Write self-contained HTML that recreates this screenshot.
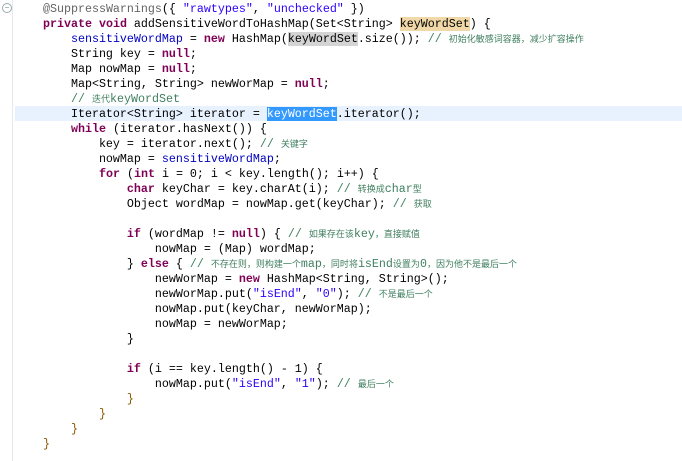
<!DOCTYPE html>
<html><head><meta charset="utf-8"><style>
body{margin:0;background:#fff;width:682px;height:461px;overflow:hidden;position:relative}
.g{position:absolute;left:12px;top:0;width:1px;height:461px;background:#e8e8e8}
.cur{position:absolute;left:15px;top:106px;width:667px;height:15px;background:#e8f2fe}
pre{position:absolute;left:15px;top:2px;margin:0;font-family:"Liberation Mono",monospace;font-size:11.67px;line-height:15px;color:#000}
.k{color:#7f0055;font-weight:bold}.s{color:#2a00ff}.c{color:#3f7f5f}.f{color:#0000c0}.a{color:#646464}
.z{font-family:"Noto Sans CJK SC",sans-serif;font-size:9px;color:#3f7f5f;line-height:0}
.o{background:#f0d8a8}.gr{background:#d4d4d4}.sel{background:#3399ff;color:#fff}.b{color:#8a5a00}
.col{position:absolute;left:2px;top:3px;width:8px;height:8px;border:1px solid #9aa;border-radius:50%;font-size:8px;line-height:8px;text-align:center;color:#788;font-family:"Liberation Sans",sans-serif}
</style></head><body>
<div class="g"></div><div class="cur"></div>
<div class="col">−</div>
<pre>    <span class="a">@SuppressWarnings</span>({ <span class="s">"rawtypes"</span>, <span class="s">"unchecked"</span> })
    <span class="k">private</span> <span class="k">void</span> addSensitiveWordToHashMap(Set&lt;String&gt; <span class="o">keyWordSet</span>) {
        <span class="f">sensitiveWordMap</span> = <span class="k">new</span> HashMap(<span class="gr">keyWordSet</span>.size()); <span class="c">// <span class="z">初始化敏感词容器，减少扩容操作</span></span>
        String key = <span class="k">null</span>;
        Map nowMap = <span class="k">null</span>;
        Map&lt;String, String&gt; newWorMap = <span class="k">null</span>;
        <span class="c">// <span class="z">迭代</span>keyWordSet</span>
        Iterator&lt;String&gt; iterator = <span class="sel">keyWordSet</span>.iterator();
        <span class="k">while</span> (iterator.hasNext()) {
            key = iterator.next(); <span class="c">// <span class="z">关键字</span></span>
            nowMap = <span class="f">sensitiveWordMap</span>;
            <span class="k">for</span> (<span class="k">int</span> i = 0; i &lt; key.length(); i++) {
                <span class="k">char</span> keyChar = key.charAt(i); <span class="c">// <span class="z">转换成</span>char<span class="z">型</span></span>
                Object wordMap = nowMap.get(keyChar); <span class="c">// <span class="z">获取</span></span>

                <span class="k">if</span> (wordMap != <span class="k">null</span>) { <span class="c">// <span class="z">如果存在该</span>key<span class="z">，直接赋值</span></span>
                    nowMap = (Map) wordMap;
                } <span class="k">else</span> { <span class="c">// <span class="z">不存在则，则构建一个</span>map<span class="z">，同时将</span>isEnd<span class="z">设置为</span>0<span class="z">，因为他不是最后一个</span></span>
                    newWorMap = <span class="k">new</span> HashMap&lt;String, String&gt;();
                    newWorMap.put(<span class="s">"isEnd"</span>, <span class="s">"0"</span>); <span class="c">// <span class="z">不是最后一个</span></span>
                    nowMap.put(keyChar, newWorMap);
                    nowMap = newWorMap;
                }

                <span class="k">if</span> (i == key.length() - 1) {
                    nowMap.put(<span class="s">"isEnd"</span>, <span class="s">"1"</span>); <span class="c">// <span class="z">最后一个</span></span>
                <span class="b">}</span>
            <span class="b">}</span>
        <span class="b">}</span>
    <span class="b">}</span></pre>
</body></html>
